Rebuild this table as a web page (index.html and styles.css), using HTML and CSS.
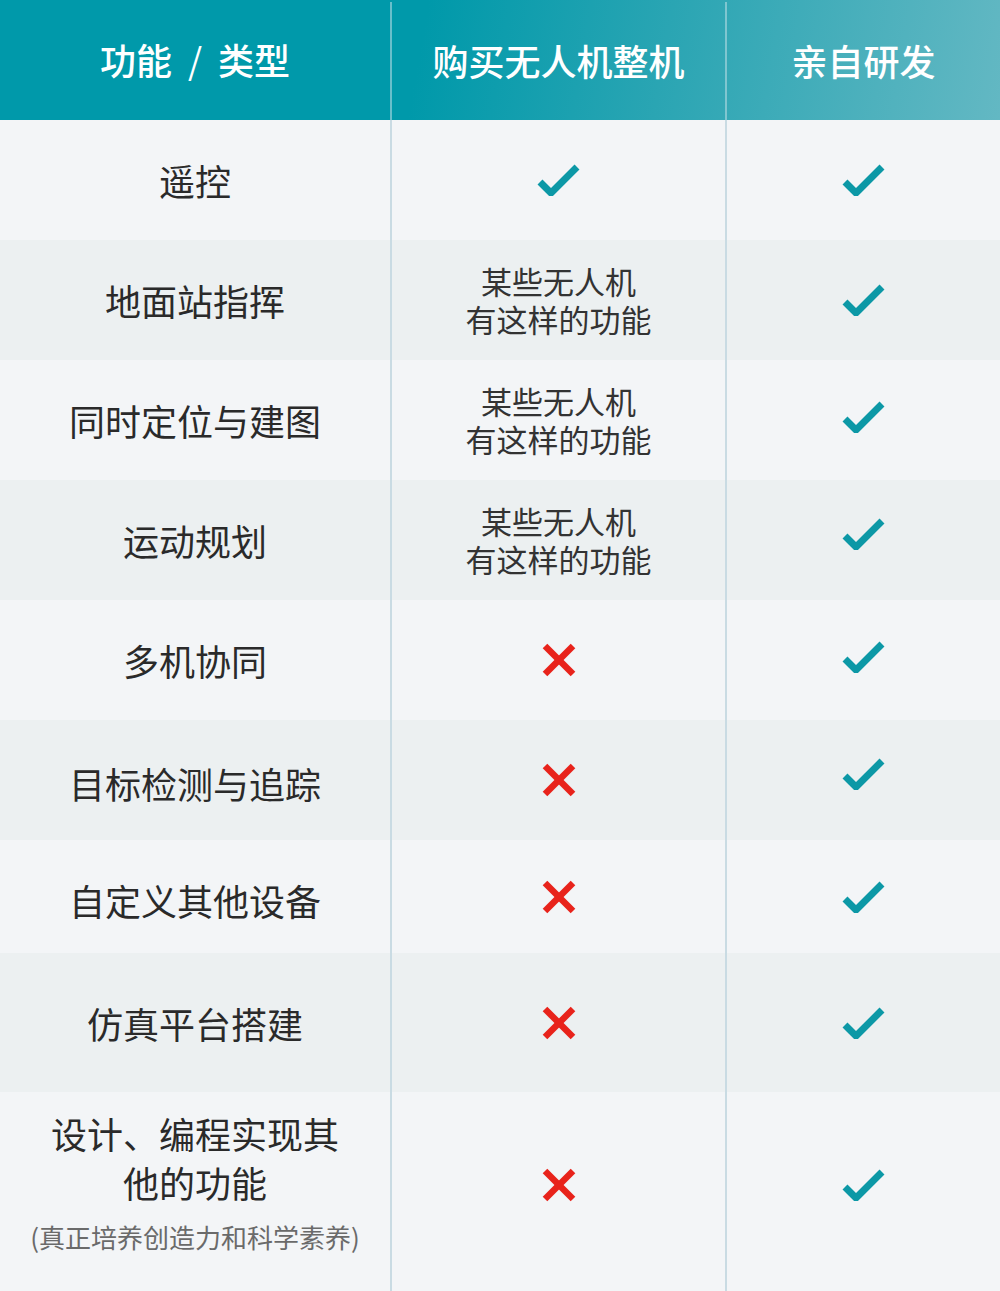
FILE: index.html
```html
<!DOCTYPE html>
<html lang="zh-CN">
<head>
<meta charset="utf-8">
<title>对比</title>
<link rel="stylesheet" href="styles.css">
</head>
<body>
<div class="table">
  <div class="row head">
    <div class="cell">功能<span class="slash">/</span>类型</div>
    <div class="cell div">购买无人机整机</div>
    <div class="cell div">亲自研发</div>
  </div>

  <div class="row odd h120">
    <div class="cell name">遥控</div>
    <div class="cell div"><svg class="ok" viewBox="0 0 43 32"><polyline points="3,18 14,29 40,3"/></svg></div>
    <div class="cell div"><svg class="ok" viewBox="0 0 43 32"><polyline points="3,18 14,29 40,3"/></svg></div>
  </div>

  <div class="row even h120">
    <div class="cell name">地面站指挥</div>
    <div class="cell div some">某些无人机<br>有这样的功能</div>
    <div class="cell div"><svg class="ok" viewBox="0 0 43 32"><polyline points="3,18 14,29 40,3"/></svg></div>
  </div>

  <div class="row odd h120">
    <div class="cell name">同时定位与建图</div>
    <div class="cell div some">某些无人机<br>有这样的功能</div>
    <div class="cell div up"><svg class="ok" viewBox="0 0 43 32"><polyline points="3,18 14,29 40,3"/></svg></div>
  </div>

  <div class="row even h120">
    <div class="cell name">运动规划</div>
    <div class="cell div some">某些无人机<br>有这样的功能</div>
    <div class="cell div up2"><svg class="ok" viewBox="0 0 43 32"><polyline points="3,18 14,29 40,3"/></svg></div>
  </div>

  <div class="row odd h120">
    <div class="cell name">多机协同</div>
    <div class="cell div"><svg class="no" viewBox="0 0 34 34"><line x1="3" y1="3" x2="31" y2="31"/><line x1="31" y1="3" x2="3" y2="31"/></svg></div>
    <div class="cell div up"><svg class="ok" viewBox="0 0 43 32"><polyline points="3,18 14,29 40,3"/></svg></div>
  </div>

  <div class="row even h120 lower">
    <div class="cell name">目标检测与追踪</div>
    <div class="cell div"><svg class="no" viewBox="0 0 34 34"><line x1="3" y1="3" x2="31" y2="31"/><line x1="31" y1="3" x2="3" y2="31"/></svg></div>
    <div class="cell div up2"><svg class="ok" viewBox="0 0 43 32"><polyline points="3,18 14,29 40,3"/></svg></div>
  </div>

  <div class="row odd h113 lower">
    <div class="cell name">自定义其他设备</div>
    <div class="cell div"><svg class="no" viewBox="0 0 34 34"><line x1="3" y1="3" x2="31" y2="31"/><line x1="31" y1="3" x2="3" y2="31"/></svg></div>
    <div class="cell div"><svg class="ok" viewBox="0 0 43 32"><polyline points="3,18 14,29 40,3"/></svg></div>
  </div>

  <div class="row even h139">
    <div class="cell name">仿真平台搭建</div>
    <div class="cell div"><svg class="no" viewBox="0 0 34 34"><line x1="3" y1="3" x2="31" y2="31"/><line x1="31" y1="3" x2="3" y2="31"/></svg></div>
    <div class="cell div"><svg class="ok" viewBox="0 0 43 32"><polyline points="3,18 14,29 40,3"/></svg></div>
  </div>

  <div class="row odd h199">
    <div class="cell name multi">
      <div class="big">设计、编程实现其<br>他的功能</div>
      <div class="small">(真正培养创造力和科学素养)</div>
    </div>
    <div class="cell div up3"><svg class="no" viewBox="0 0 34 34"><line x1="3" y1="3" x2="31" y2="31"/><line x1="31" y1="3" x2="3" y2="31"/></svg></div>
    <div class="cell div up3"><svg class="ok" viewBox="0 0 43 32"><polyline points="3,18 14,29 40,3"/></svg></div>
  </div>
</div>
</body>
</html>
```

FILE: styles.css
```css
* { box-sizing: border-box; }

html, body {
  margin: 0;
  padding: 0;
  background: #f3f5f7;
}

body {
  font-family: "Noto Sans CJK SC", "Noto Sans", sans-serif;
  color: #2a2a2a;
}

.table {
  width: 1000px;
}

.row {
  display: grid;
  grid-template-columns: 390px 335px 275px;
}

.cell {
  display: flex;
  align-items: center;
  justify-content: center;
  text-align: center;
}

.div {
  border-left: 2px solid #c9dbe3;
}

.head {
  height: 120px;
  background: linear-gradient(100deg, #0099aa 0%, #0099aa 42%, #2aa5b3 66%, #63b8c3 100%);
  color: #fff;
  font-size: 36px;
  font-weight: 500;
}

.head .cell {
  padding-bottom: 2px;
}

.head .div {
  border-left: 2px solid rgba(190, 222, 230, 0.55);
  margin-top: 2px;
}

.slash {
  font-weight: 400;
  margin: 0 16px;
}

.odd { background: #f3f5f7; }
.even { background: #ecf0f1; }

.h120 { height: 120px; }
.h113 { height: 113px; }
.h139 { height: 139px; }
.h199 { height: 199px; }

.lower .name {
  padding-top: 6px;
}

.up { padding-bottom: 6px; }
.up2 { padding-bottom: 12px; }
.up3 { padding-bottom: 14px; }

.name {
  font-size: 36px;
  color: #2a2a2a;
}

.some {
  font-size: 31px;
  line-height: 38px;
  color: #333;
}

.multi {
  flex-direction: column;
  padding-bottom: 20px;
}

.multi .big {
  font-size: 36px;
  line-height: 49px;
}

.multi .small {
  margin-top: 12px;
  font-size: 26px;
  line-height: 36px;
  color: #6a6a6a;
}

.ok {
  width: 43px;
  height: 32px;
  fill: none;
  stroke: #0c98a6;
  stroke-width: 7;
  stroke-linejoin: miter;
  stroke-linecap: butt;
}

.no {
  width: 34px;
  height: 34px;
  stroke: #e8231b;
  stroke-width: 6.5;
  stroke-linecap: butt;
}
```
